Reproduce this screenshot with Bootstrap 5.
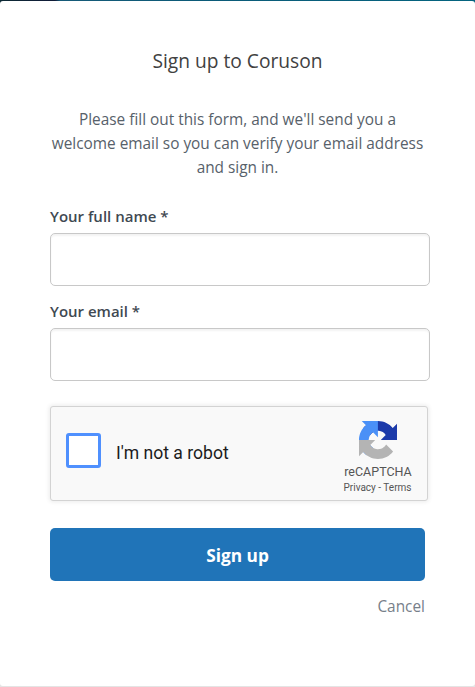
<!DOCTYPE html>
<html lang="en">
<head>
<meta charset="utf-8">
<meta name="viewport" content="width=device-width, initial-scale=1">
<title>Sign up to Coruson</title>
<link href="https://cdn.jsdelivr.net/npm/bootstrap@5.3.0/dist/css/bootstrap.min.css" rel="stylesheet">
<style>
body{height:687px;overflow:hidden;padding-top:1px;font-family:"Open Sans","Noto Sans",sans-serif;background:linear-gradient(90deg,#0d2a35 0,#101b38 55px,#165a78 60px,#0b5a78 200px,#04647f 475px) 0 0/100% 8px no-repeat,#e4e4e4}
.panel{height:685px;padding:44px 50px 0;border-radius:3px}
.title{font-size:19.2px;line-height:32px;color:#414141}
.intro{font-size:15.38px;line-height:24px;color:#57616a;margin-top:31px;white-space:nowrap}
.field-label{font-size:15px;line-height:24px;font-weight:600;color:#3f4952;margin-bottom:5px}
.first{margin-top:24px}
.second{margin-top:13px}
.field{width:380px;height:53px;border:1px solid #c8c8c8;border-radius:5px;box-shadow:inset 0 2px 2px rgba(0,0,0,.05)}
.captcha{width:378px;height:95px;margin-top:25px;background:#f9f9f9;border:1px solid #d3d3d3;border-radius:3px;box-shadow:0 0 4px 1px rgba(0,0,0,.08);font-family:Roboto,sans-serif}
.tick{width:35px;height:35px;margin:-7px 0 0 15px;border:3px solid #4f90fe;border-radius:3px}
.robot{font-size:17.6px;line-height:24px;margin:-2px 0 0 15px;color:#1c1c1c}
.brand{width:100px;margin-right:-1px;padding-top:14px;color:#555}
.brand-name{font-size:12.5px;line-height:16px;margin-top:5px}
.brand-links{font-size:10px;line-height:12px;margin:2px 1px 0 0}
.submit{height:53px;margin-top:27px;padding:2px 0 0;background:#2074b8;border-radius:5px;color:#fff;font-weight:700;font-size:17.3px}
.submit:hover{background:#1b67a5;color:#fff}
.cancel{font-size:15.4px;line-height:24px;margin-top:14px;color:#77808a}
</style>
</head>
<body>
<main class="panel bg-white">
  <h1 class="title text-center fw-normal mb-0">Sign up to Coruson</h1>
  <p class="intro text-center mb-0">Please fill out this form, and we'll send you a<br>welcome email so you can verify your email address<br>and sign in.</p>
  <form>
    <div class="first">
      <label class="field-label d-block" for="name">Your full name *</label>
      <input class="field form-control" id="name" type="text">
    </div>
    <div class="second">
      <label class="field-label d-block" for="email">Your email *</label>
      <input class="field form-control" id="email" type="email">
    </div>
    <div class="captcha d-flex align-items-center">
      <div class="tick bg-white flex-shrink-0"></div>
      <div class="robot text-nowrap">I'm not a robot</div>
      <div class="brand ms-auto align-self-start text-center">
        <svg class="d-block mx-auto" width="38" height="38" viewBox="0 0 64 64" aria-hidden="true">
          <path fill="#1c3aa9" d="M64 31.955l-.033-1.37V4.687l-7.16 7.16C50.948 4.674 42.033.093 32.05.093c-10.4 0-19.622 4.96-25.458 12.64l11.736 11.86a15.55 15.55 0 0 1 4.754-5.334c2.05-1.6 4.952-2.906 8.968-2.906.485 0 .86.057 1.135.163 4.976.393 9.288 3.14 11.828 7.124l-8.307 8.307L64 31.953"/>
          <path fill="#4a90f7" d="M31.862.094l-1.37.033H4.594l7.16 7.16C4.58 13.147 0 22.06 0 32.046c0 10.4 4.96 19.622 12.64 25.458L24.5 45.768a15.55 15.55 0 0 1-5.334-4.754c-1.6-2.05-2.906-4.952-2.906-8.968 0-.485.057-.86.163-1.135.393-4.976 3.14-9.288 7.124-11.828l8.307 8.307L31.86.095"/>
          <path fill="#b4b4b4" d="M.001 32.045l.033 1.37v25.898l7.16-7.16c5.86 7.173 14.774 11.754 24.76 11.754 10.4 0 19.622-4.96 25.458-12.64l-11.736-11.86a15.55 15.55 0 0 1-4.754 5.334c-2.05 1.6-4.952 2.906-8.968 2.906-.485 0-.86-.057-1.135-.163-4.976-.393-9.288-3.14-11.828-7.124l8.307-8.307z"/>
        </svg>
        <div class="brand-name">reCAPTCHA</div>
        <div class="brand-links">Privacy - Terms</div>
      </div>
    </div>
    <button class="submit btn border-0 w-100" type="button">Sign up</button>
    <div class="cancel text-end">Cancel</div>
  </form>
</main>
<script src="https://cdn.jsdelivr.net/npm/bootstrap@5.3.0/dist/js/bootstrap.bundle.min.js"></script>
</body>
</html>
